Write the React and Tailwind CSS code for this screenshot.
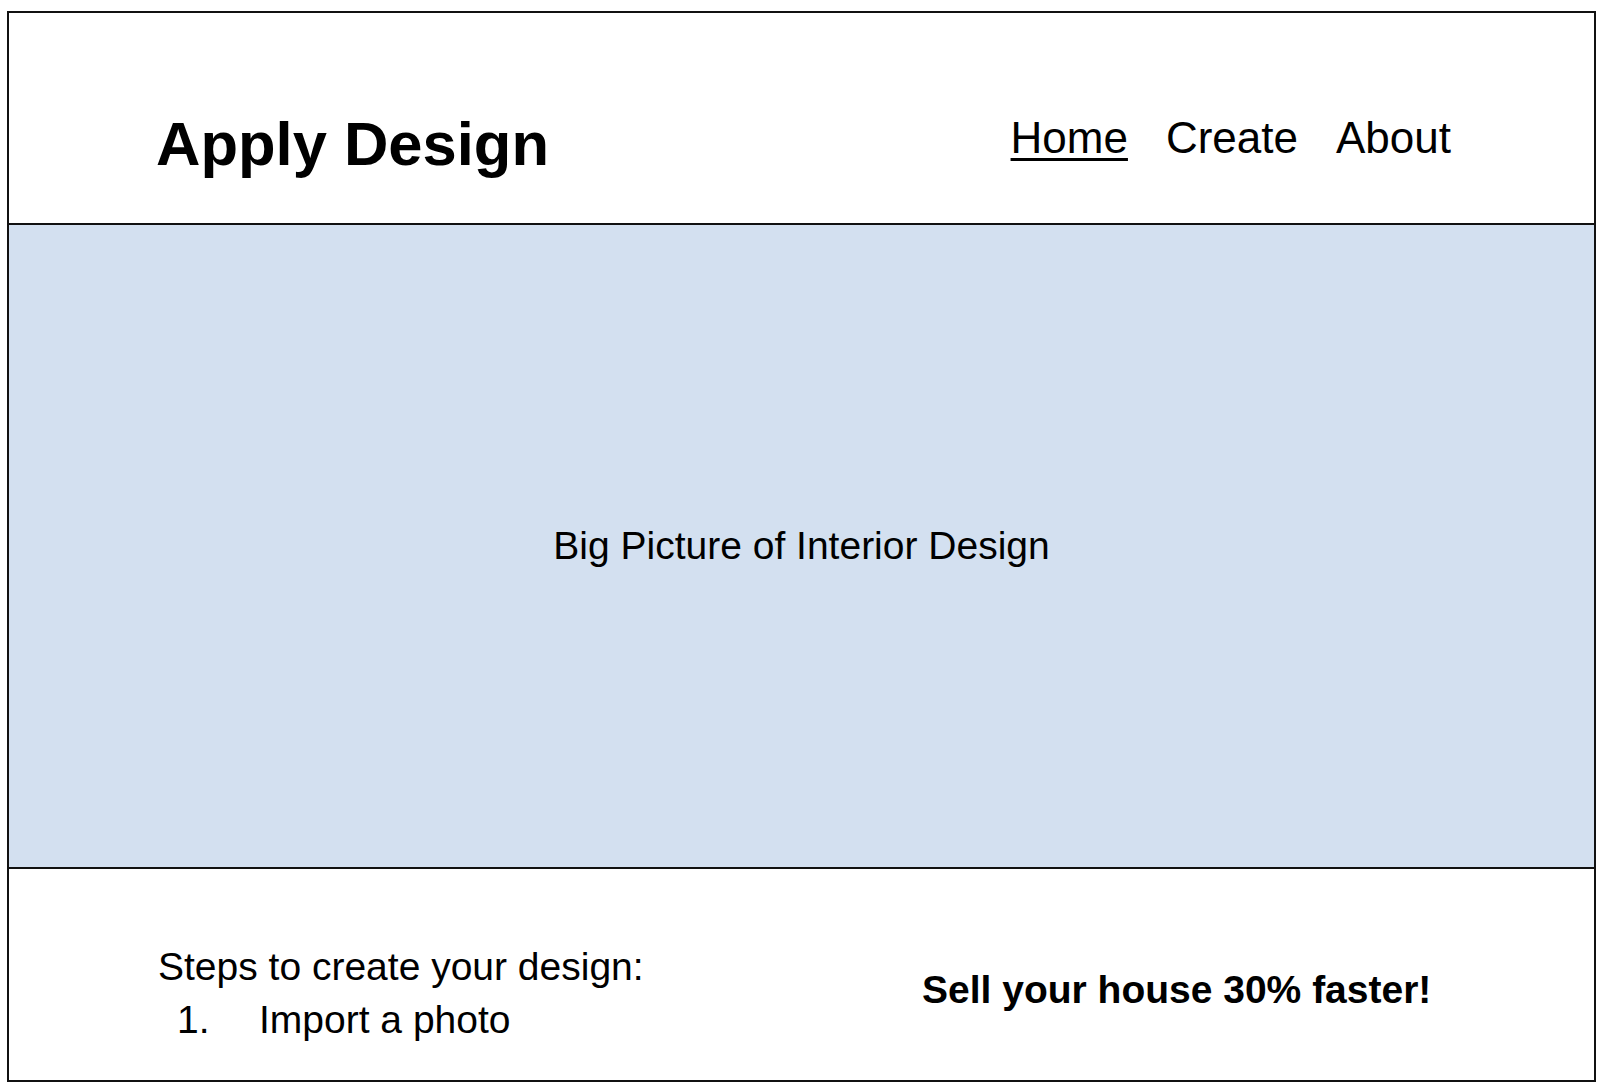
export default function App() {
  const font = { fontFamily: '"Liberation Sans", Arial, sans-serif' };

  return (
    <div className="min-h-screen bg-white pt-[11px] pl-[7px] pr-[8px] pb-[6px]" style={font}>
      <div className="flex flex-col h-[1071px] border-2 border-[#111] text-black">
        {/* header */}
        <header className="h-[212px] shrink-0 border-b-2 border-[#111] flex items-start justify-between pl-[147px] pr-[143px] pt-[100px]">
          <h1 className="text-[61.5px] leading-none font-bold">Apply Design</h1>
          <nav className="flex gap-[38px] text-[44px] leading-none mt-[3px]">
            <a href="#" className="underline decoration-[3px] underline-offset-[5px]">
              Home
            </a>
            <a href="#">Create</a>
            <a href="#">About</a>
          </nav>
        </header>

        {/* hero picture placeholder */}
        <section className="h-[644px] shrink-0 border-b-2 border-[#111] bg-[#d3e0f0] flex items-center justify-center">
          <p className="text-[39px]">Big Picture of Interior Design</p>
        </section>

        {/* bottom info */}
        <section className="flex-1 flex">
          <div className="w-[913px] pl-[149px] pt-[71px] text-[39px] leading-[53px]">
            <p>Steps to create your design:</p>
            <ol className="flex">
              <li className="flex">
                <span className="ml-[19px] w-[82px]">1.</span>
                <span>Import a photo</span>
              </li>
            </ol>
          </div>
          <div className="flex-1 pt-[98px]">
            <p className="text-[39px] leading-[45px] font-bold">Sell your house 30% faster!</p>
          </div>
        </section>
      </div>
    </div>
  );
}
